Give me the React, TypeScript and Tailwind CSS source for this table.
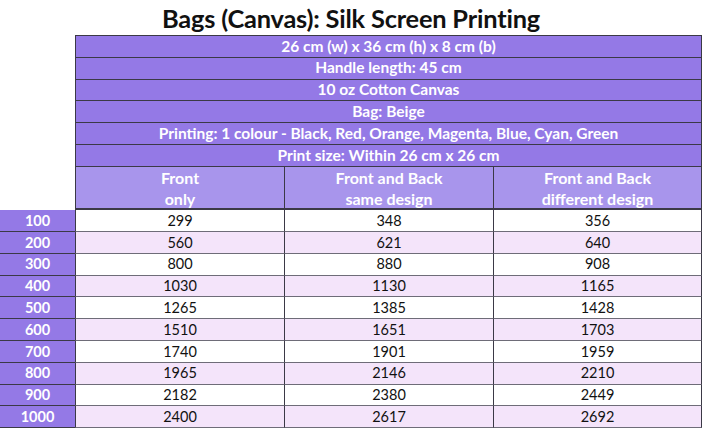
const specs = [
  '26 cm (w) x 36 cm (h) x 8 cm (b)',
  'Handle length: 45 cm',
  '10 oz Cotton Canvas',
  'Bag: Beige',
  'Printing: 1 colour - Black, Red, Orange, Magenta, Blue, Cyan, Green',
  'Print size: Within 26 cm x 26 cm',
];

const columns = [
  ['Front', 'only'],
  ['Front and Back', 'same design'],
  ['Front and Back', 'different design'],
];

const prices = [
  [100, 299, 348, 356],
  [200, 560, 621, 640],
  [300, 800, 880, 908],
  [400, 1030, 1130, 1165],
  [500, 1265, 1385, 1428],
  [600, 1510, 1651, 1703],
  [700, 1740, 1901, 1959],
  [800, 1965, 2146, 2210],
  [900, 2182, 2380, 2449],
  [1000, 2400, 2617, 2692],
];

export default function App() {
  return (
    <div className="w-[702px] h-[428px] overflow-hidden bg-white font-['Lato','Open_Sans',sans-serif] text-[#111]">
      <h1 className="h-[35px] text-center text-[25.4px] font-bold leading-[36px] tracking-[-0.2px]">
        Bags (Canvas): Silk Screen Printing
      </h1>

      {/* spec rows */}
      <div className="ml-[75px] border-x border-t border-[#3b3946] text-white font-bold text-[15.5px]">
        {specs.map((s) => (
          <div
            key={s}
            className="h-[21.8px] border-b border-[#3b3946] bg-[#9479e6] flex items-center justify-center leading-none"
          >
            {s}
          </div>
        ))}
        <div className="flex h-[43.5px] bg-[#a895ec] border-b-2 border-[#3b3946] text-[16px]">
          {columns.map((c, i) => (
            <div
              key={i}
              className={`flex flex-col items-center justify-center leading-[21px] ${
                i < 2 ? 'w-[209px] border-r border-[#3b3946]' : 'flex-1'
              }`}
            >
              <span>{c[0]}</span>
              <span>{c[1]}</span>
            </div>
          ))}
        </div>
      </div>

      {/* price rows */}
      <div className="text-[14.5px]">
        {prices.map((row, r) => (
          <div key={row[0]} className="flex h-[21.8px]">
            <div className="w-[75px] bg-[#9479e6] text-white font-bold flex items-center justify-center border-b border-[#3b3946]">
              {row[0]}
            </div>
            {row.slice(1).map((v, i) => (
              <div
                key={i}
                className={`flex items-center justify-center border-l border-b border-l-[#3b3946] border-b-[#6e6c78] ${
                  i < 2 ? 'w-[209px]' : 'flex-1 border-r border-r-[#3b3946]'
                } ${r % 2 === 0 ? 'bg-white' : 'bg-[#f4e4fa]'}`}
              >
                {v}
              </div>
            ))}
          </div>
        ))}
      </div>
    </div>
  );
}
